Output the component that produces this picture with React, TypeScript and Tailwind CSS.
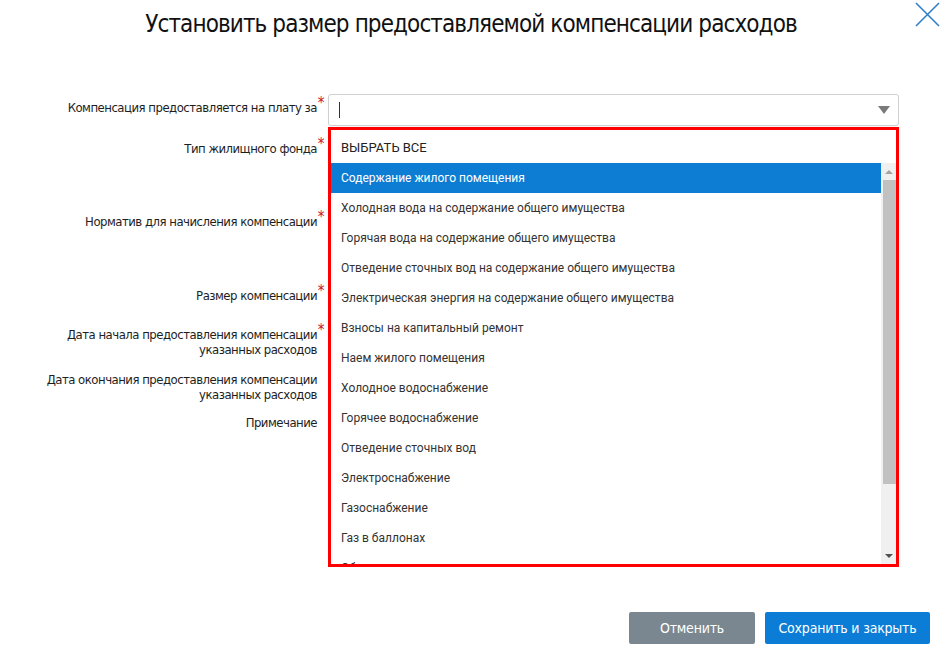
import React from 'react'

const condensed = { fontFamily: '"DejaVu Sans Condensed", "Roboto", sans-serif' }

const options = [
  'Содержание жилого помещения',
  'Холодная вода на содержание общего имущества',
  'Горячая вода на содержание общего имущества',
  'Отведение сточных вод на содержание общего имущества',
  'Электрическая энергия на содержание общего имущества',
  'Взносы на капитальный ремонт',
  'Наем жилого помещения',
  'Холодное водоснабжение',
  'Горячее водоснабжение',
  'Отведение сточных вод',
  'Электроснабжение',
  'Газоснабжение',
  'Газ в баллонах',
  'Обращение с твердыми коммунальными отходами',
]

const rows: { label: string[]; required?: boolean; h: string }[] = [
  { label: ['Компенсация предоставляется на плату за'], required: true, h: 'h-[41px]' },
  { label: ['Тип жилищного фонда'], required: true, h: 'h-[73px]' },
  { label: ['Норматив для начисления компенсации'], required: true, h: 'h-[74px]' },
  { label: ['Размер компенсации'], required: true, h: 'h-[39px]' },
  { label: ['Дата начала предоставления компенсации', 'указанных расходов'], required: true, h: 'h-[45px]' },
  { label: ['Дата окончания предоставления компенсации', 'указанных расходов'], h: 'h-[43px]' },
  { label: ['Примечание'], h: 'h-[30px]' },
]

function Label({ lines, required }: { lines: string[]; required?: boolean }) {
  return (
    <div className="w-[317px] text-right text-[13px] leading-[15px] tracking-[-0.5px] text-[#1e1e1e] relative" style={condensed}>
      {lines.map((l, i) => (
        <div key={i}>{l}</div>
      ))}
      {required && <span className="absolute -right-[7px] -top-[4px] text-[#c8102e] text-[15px]">*</span>}
    </div>
  )
}

export default function App() {
  return (
    <div className="w-[950px] h-[664px] bg-white relative overflow-hidden" style={{ fontFamily: 'Roboto, Arial, sans-serif' }}>
      {/* header */}
      <div className="h-[48px] flex items-center justify-center pr-[8px]">
        <h1 className="text-[24px] text-[#111] tracking-[-0.9px]" style={condensed}>
          Установить размер предоставляемой компенсации расходов
        </h1>
      </div>
      <button className="absolute right-[10px] top-[2px] w-[25px] h-[25px]">
        <svg viewBox="0 0 25 25" className="w-[25px] h-[25px]">
          <path d="M1 1 L24 24 M24 1 L1 24" stroke="#2f80c8" strokeWidth="1.6" fill="none" />
        </svg>
      </button>

      {/* form */}
      <div className="mt-[52px] flex flex-col">
        {rows.map((r, i) => (
          <div key={i} className={`flex ${r.h}`}>
            <Label lines={r.label} required={r.required} />
          </div>
        ))}
      </div>

      {/* select input */}
      <div className="absolute left-[328px] top-[94px] w-[571px] h-[32px] border border-[#d0d0d0] rounded-[3px] bg-white flex items-center pl-[10px] pr-[8px] shadow-[0_1px_1px_rgba(0,0,0,0.04)]">
        <div className="w-px h-[16px] bg-[#333]" />
        <div className="ml-auto w-0 h-0 border-l-[6px] border-r-[6px] border-t-[8px] border-l-transparent border-r-transparent border-t-[#7a7a7a]" />
      </div>

      {/* dropdown */}
      <div className="absolute left-[328px] top-[127px] w-[571px] h-[440px] border-[3px] border-[#ff0000] bg-white flex flex-col">
        <div className="h-[33px] flex items-center pl-[10px] text-[13px] text-[#222] pt-[3px]">ВЫБРАТЬ ВСЕ</div>
        <div className="flex h-[401px]">
          <div className="flex-1 overflow-hidden">
            {options.map((o, i) => (
              <div
                key={o}
                className={`h-[30px] flex items-center pl-[10px] text-[12px] ${i === 0 ? 'bg-[#0d7dd4] text-white' : 'text-[#333]'}`}
              >
                {o}
              </div>
            ))}
          </div>
          <div className="w-[15px] bg-[#f0f0f0] flex flex-col items-center">
            <div className="h-[17px] flex items-center justify-center">
              <div className="w-0 h-0 border-l-[4px] border-r-[4px] border-b-[4px] border-l-transparent border-r-transparent border-b-[#a3a3a3]" />
            </div>
            <div className="w-[13px] ml-[2px] h-[304px] bg-[#c1c1c1]" />
            <div className="mt-auto h-[17px] flex items-center justify-center">
              <div className="w-0 h-0 border-l-[4px] border-r-[4px] border-t-[4px] border-l-transparent border-r-transparent border-t-[#505050]" />
            </div>
          </div>
        </div>
      </div>

      {/* footer buttons */}
      <div className="absolute right-[20px] bottom-[20px] flex gap-[10px] tracking-[-0.2px]" style={condensed}>
        <button className="w-[126px] h-[32px] rounded-[2px] bg-[#7b8790] text-white text-[14px]">Отменить</button>
        <button className="w-[165px] h-[32px] rounded-[2px] bg-[#0b7dd6] text-white text-[14px]">Сохранить и закрыть</button>
      </div>
    </div>
  )
}
